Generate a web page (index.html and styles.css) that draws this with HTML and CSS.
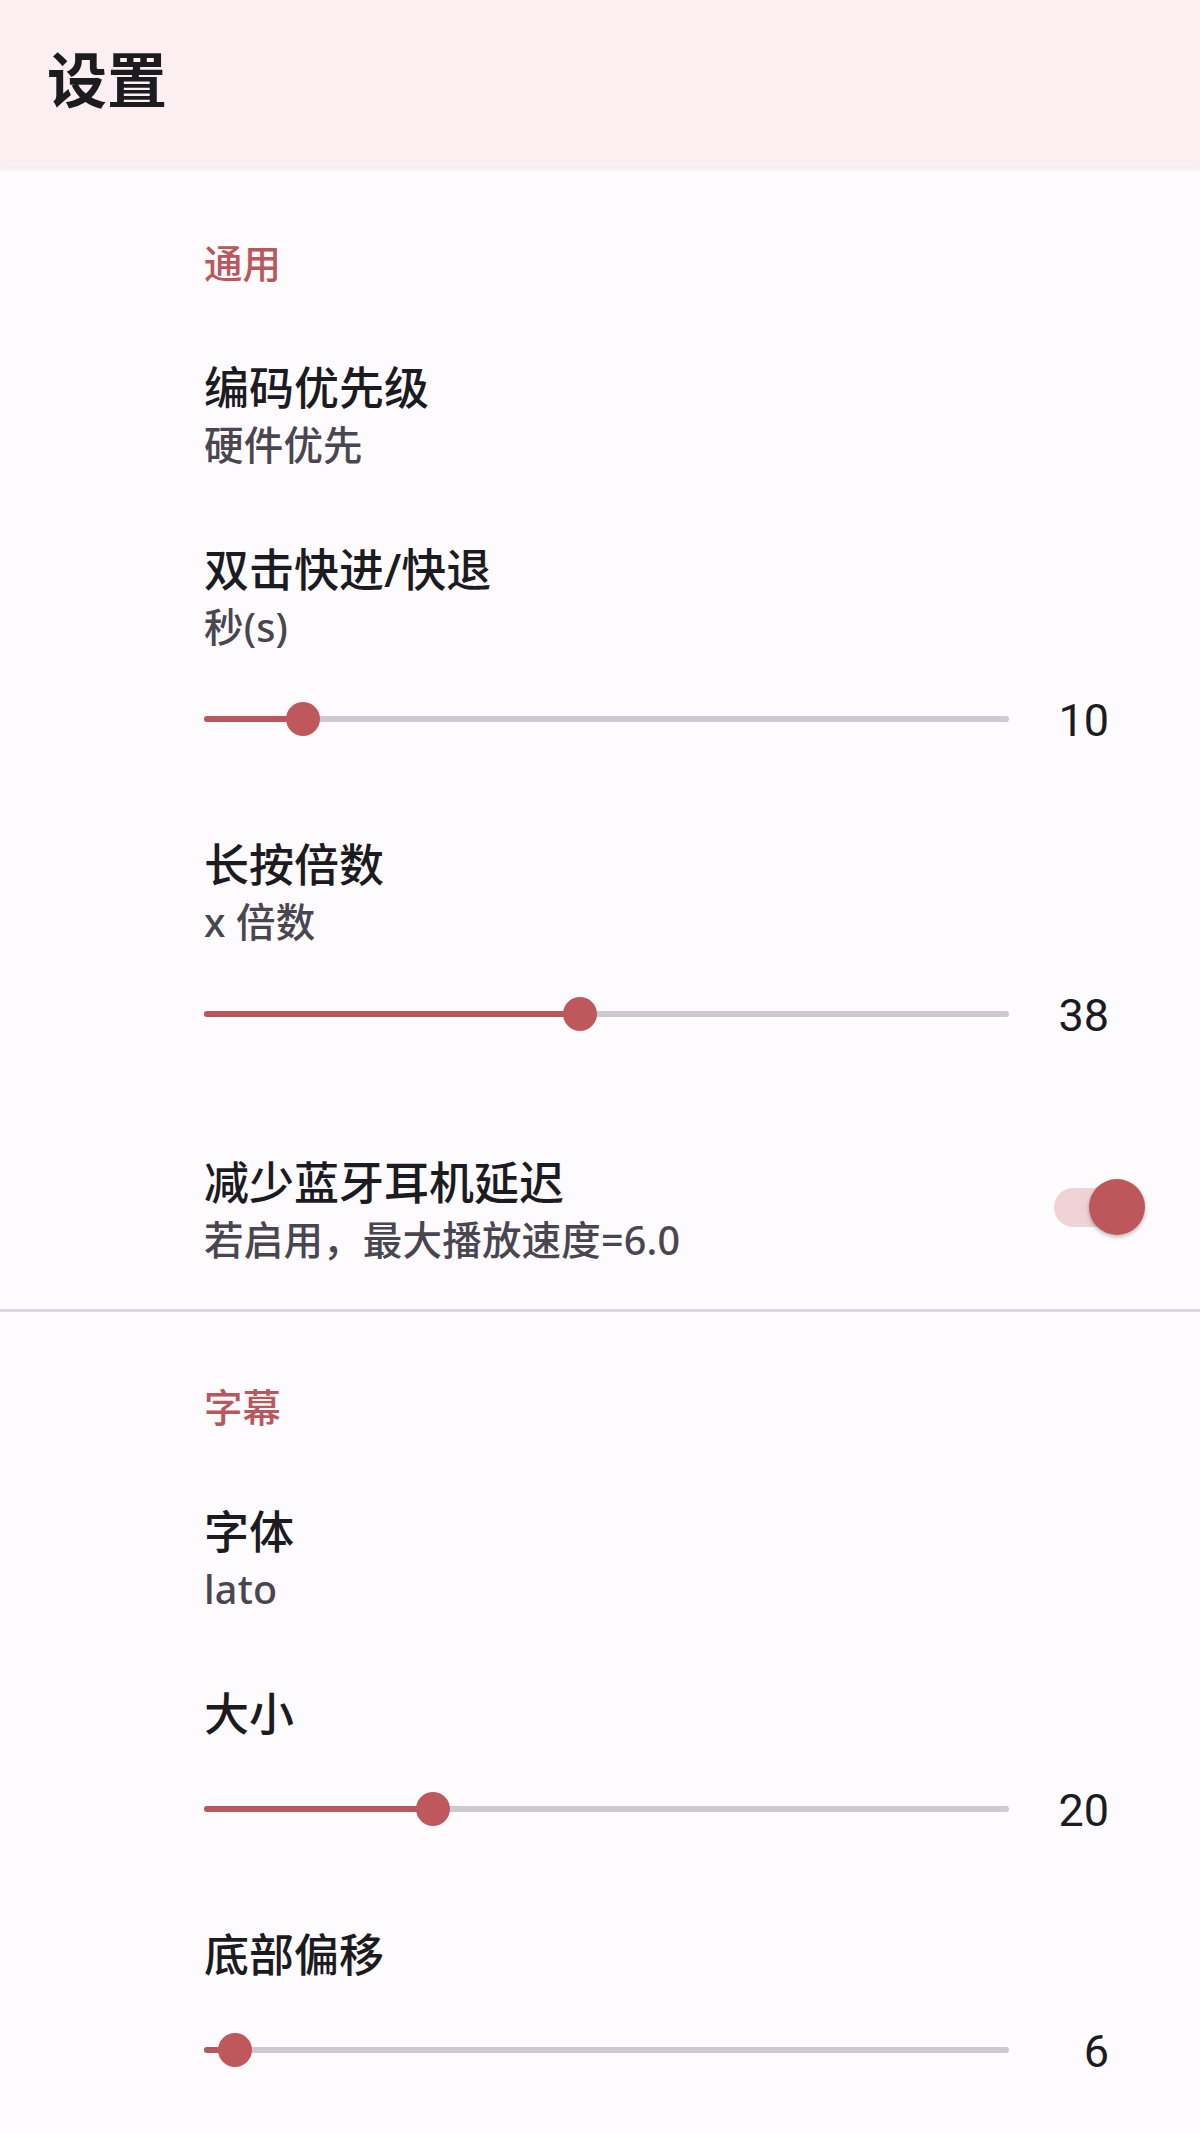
FILE: index.html
```html
<!DOCTYPE html>
<html lang="zh-CN">
<head>
<meta charset="utf-8">
<title>设置</title>
<link rel="stylesheet" href="styles.css">
</head>
<body>
<div class="app">
  <header class="topbar">
    <h1 class="topbar-title">设置</h1>
  </header>
  <main class="content">
    <section class="group">
      <div class="group-label">通用</div>
      <div class="pref">
        <div class="pref-title">编码优先级</div>
        <div class="pref-sub">硬件优先</div>
      </div>
      <div class="pref pref-slider">
        <div class="pref-title">双击快进/快退</div>
        <div class="pref-sub">秒(s)</div>
        <div class="slider-row">
          <div class="slider">
            <div class="slider-track"><div class="slider-fill" style="width:12.3%"></div></div>
            <div class="slider-thumb" style="left:12.3%"></div>
          </div>
          <div class="slider-value">10</div>
        </div>
      </div>
      <div class="pref pref-slider">
        <div class="pref-title">长按倍数</div>
        <div class="pref-sub">x 倍数</div>
        <div class="slider-row">
          <div class="slider">
            <div class="slider-track"><div class="slider-fill" style="width:46.7%"></div></div>
            <div class="slider-thumb" style="left:46.7%"></div>
          </div>
          <div class="slider-value">38</div>
        </div>
      </div>
      <div class="pref pref-switch">
        <div class="pref-text">
          <div class="pref-title">减少蓝牙耳机延迟</div>
          <div class="pref-sub">若启用，最大播放速度=6.0</div>
        </div>
        <div class="switch">
          <div class="switch-track"></div>
          <div class="switch-thumb"></div>
        </div>
      </div>
    </section>
    <div class="divider"></div>
    <section class="group">
      <div class="group-label group-label-2">字幕</div>
      <div class="pref">
        <div class="pref-title">字体</div>
        <div class="pref-sub">lato</div>
      </div>
      <div class="pref pref-slider">
        <div class="pref-title">大小</div>
        <div class="slider-row">
          <div class="slider">
            <div class="slider-track"><div class="slider-fill" style="width:28.4%"></div></div>
            <div class="slider-thumb" style="left:28.4%"></div>
          </div>
          <div class="slider-value">20</div>
        </div>
      </div>
      <div class="pref pref-slider">
        <div class="pref-title">底部偏移</div>
        <div class="slider-row">
          <div class="slider">
            <div class="slider-track"><div class="slider-fill" style="width:3.9%"></div></div>
            <div class="slider-thumb" style="left:3.9%"></div>
          </div>
          <div class="slider-value">6</div>
        </div>
      </div>
    </section>
  </main>
</div>
</body>
</html>
```
FILE: styles.css
```css
html, body {
  margin: 0;
  padding: 0;
}
body {
  background: #fefbfe;
  font-family: "Noto Sans", "Noto Sans CJK SC", sans-serif;
  color: #1c1b1f;
}
.app {
  width: 1200px;
  min-height: 2133px;
  background: #fefbfe;
}
.topbar {
  height: 167px;
  background: #fbeff1;
  box-shadow: 0 2px 4px rgba(0, 0, 0, 0.07);
  display: flex;
  align-items: center;
  padding: 0 0 8px 47px;
  box-sizing: border-box;
  position: relative;
  z-index: 1;
}
.topbar-title {
  margin: 0;
  font-size: 60px;
  line-height: 72px;
  font-weight: 700;
  color: #1c1b1f;
}
.content {
  display: flex;
  flex-direction: column;
}
.group {
  display: flex;
  flex-direction: column;
}
.group-label {
  padding: 69px 0 34px 204px;
  font-size: 38.5px;
  line-height: 54px;
  font-weight: 500;
  color: #b8585d;
}
.group-label-2 {
  padding-top: 68px;
}
.pref {
  padding: 34px 91px 34px 204px;
  display: flex;
  flex-direction: column;
}
.pref-title {
  font-size: 45px;
  line-height: 60px;
  font-weight: 500;
  color: #1c1b1f;
}
.pref-sub {
  font-size: 39.5px;
  line-height: 54px;
  font-weight: 500;
  letter-spacing: 0.2px;
  color: #4a4650;
}
.pref-slider {
  padding-bottom: 52px;
}
.slider-row {
  margin-top: 35px;
  height: 60px;
  display: flex;
  align-items: center;
}
.slider {
  position: relative;
  width: 805px;
  height: 34px;
  display: flex;
  align-items: center;
}
.slider-track {
  width: 100%;
  height: 6px;
  border-radius: 3px;
  background: #cccacd;
  overflow: hidden;
}
.slider-fill {
  height: 100%;
  background: #b8585d;
}
.slider-thumb {
  position: absolute;
  top: 0;
  width: 34px;
  height: 34px;
  margin-left: -17px;
  border-radius: 50%;
  background: #bf585c;
}
.slider-value {
  flex: 1;
  text-align: right;
  font-family: Roboto, "Noto Sans", sans-serif;
  font-size: 45px;
  line-height: 60px;
  padding-top: 4px;
  color: #1c1b1f;
}
.pref-switch {
  flex-direction: row;
  align-items: center;
  padding: 57px 55px 42px 204px;
}
.pref-text {
  flex: 1;
  display: flex;
  flex-direction: column;
}
.switch {
  position: relative;
  width: 91px;
  height: 56px;
  display: flex;
  align-items: center;
  margin-top: -6px;
}
.switch-track {
  width: 84px;
  height: 39px;
  border-radius: 20px;
  background: #eed2d5;
}
.switch-thumb {
  position: absolute;
  right: 0;
  top: 0;
  width: 56px;
  height: 56px;
  border-radius: 50%;
  background: #bd575b;
  box-shadow: 0 2px 4px rgba(0, 0, 0, 0.28);
}
.divider {
  height: 3px;
  background: #dcd9dc;
}
```
